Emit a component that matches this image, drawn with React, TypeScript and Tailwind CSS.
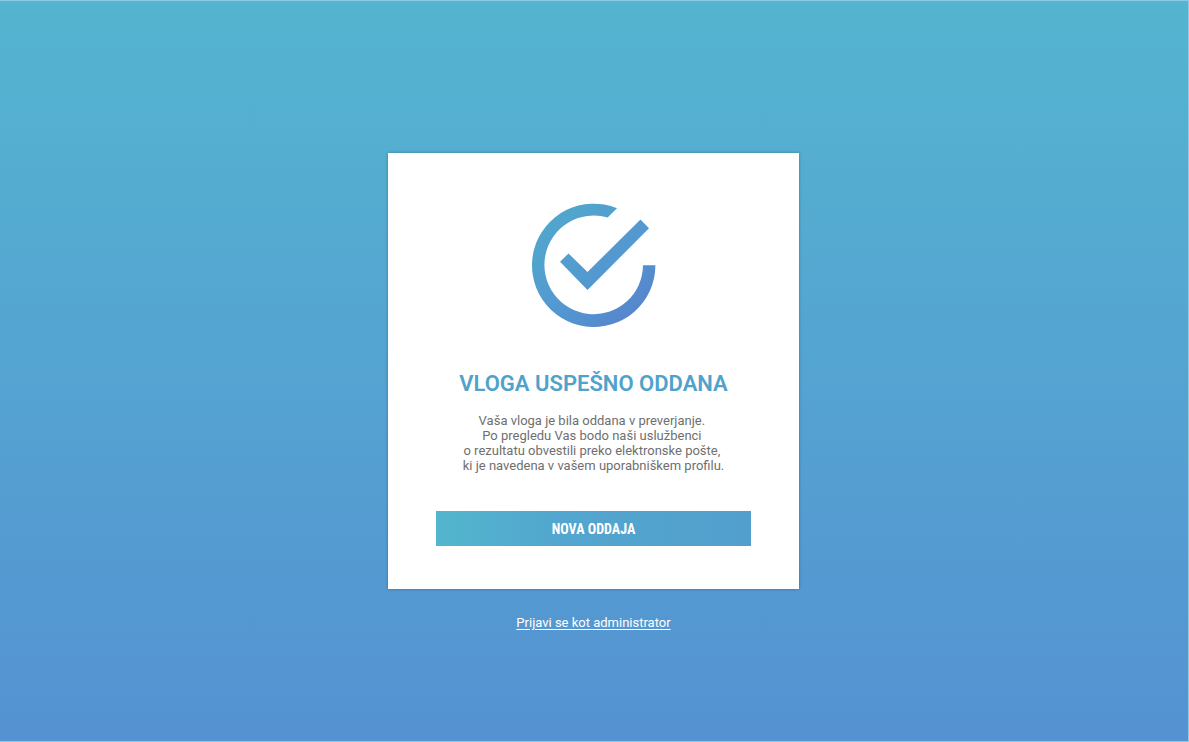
const messageLines = [
  'Vaša vloga je bila oddana v preverjanje. ',
  'Po pregledu Vas bodo naši uslužbenci ',
  'o rezultatu obvestili preko elektronske pošte, ',
  'ki je navedena v vašem uporabniškem profilu.',
];

function SuccessIcon() {
  return (
    <svg viewBox="0 0 124 124" className="size-31" fill="none" aria-hidden="true">
      <defs>
        <linearGradient id="success" x1="8" y1="16" x2="98" y2="114" gradientUnits="userSpaceOnUse">
          <stop offset="0" stopColor="#51a8cc" />
          <stop offset="0.6" stopColor="#5398d0" />
          <stop offset="1" stopColor="#5686cd" />
        </linearGradient>
      </defs>
      <path
        fill="url(#success)"
        d="M85 5.2 A61.7 61.7 0 1 0 123.4 62.3 H111 A49.3 49.3 0 1 1 75.6 14.6 Z"
      />
      <path fill="url(#success)" d="M36.5 50.5 L55.5 69 L108.5 16.5 L117 25.2 L55.5 87 L28 58.8 Z" />
    </svg>
  );
}

export default function App() {
  return (
    <main className="flex min-h-screen flex-col items-center border-y border-r border-[#8bcbe6] bg-linear-to-b from-[#54b5d0] to-[#5492d2] pt-38 pr-[17px] pb-10 pl-4 font-['Roboto',sans-serif]">
      <section className="flex w-full max-w-[411px] flex-col items-center bg-white px-12 pt-[50px] pb-[43px] text-center shadow-[0_0_3px_rgba(0,0,0,0.3)]">
        <SuccessIcon />
        <h1 className="mt-[43px] text-[22px] leading-[28px] font-semibold text-[#50a2cb]">VLOGA USPEŠNO ODDANA</h1>
        <p className="mt-[15px] text-[13px] leading-[15px] font-normal text-[#6f6f6f]">
          {messageLines.map((line) => (
            <span key={line} className="block whitespace-pre">
              {line}
            </span>
          ))}
        </p>
        <button
          type="button"
          className="mt-[38px] h-[35px] w-full cursor-pointer bg-linear-to-r from-[#52b6cd] via-[#52a6cf] via-40% to-[#529fcd] pt-px font-['Roboto_Condensed','Roboto',sans-serif] text-[14px] font-bold text-white"
        >
          NOVA ODDAJA
        </button>
      </section>
      <a href="#administrator" className="mt-[25px] text-[13px] leading-[18px] font-normal text-white underline underline-offset-2">
        Prijavi se kot administrator
      </a>
    </main>
  );
}
